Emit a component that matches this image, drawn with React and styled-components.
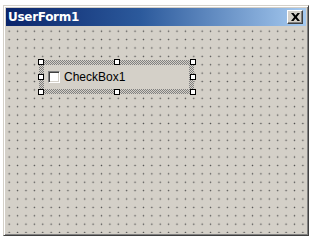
import React from 'react';
import styled, { createGlobalStyle } from 'styled-components';

const Global = createGlobalStyle`
  html, body { margin: 0; padding: 0; background: #ffffff; }
  body { font-family: "DejaVu Sans", sans-serif; }
`;

const Page = styled.div`
  width: 312px;
  height: 240px;
  padding: 5px 0 0 3px;
  box-sizing: border-box;
`;

const Window = styled.div`
  width: 306px;
  height: 231px;
  box-sizing: border-box;
  background: #d4d0c8;
  border-top: 1px solid #d4d0c8;
  border-left: 1px solid #d4d0c8;
  border-right: 1px solid #404040;
  border-bottom: 1px solid #404040;
  box-shadow: inset 1px 1px 0 #ffffff, inset -1px -1px 0 #808080;
  padding: 2px;
  display: flex;
  flex-direction: column;
`;

const TitleBar = styled.div`
  height: 18px;
  flex: none;
  display: flex;
  align-items: center;
  justify-content: space-between;
  padding: 0 3px 0 2px;
  background: linear-gradient(to right, #0a246a 0%, #2c5a9c 45%, #a6caf0 100%);
`;

const Title = styled.span`
  color: #ffffff;
  font-family: "DejaVu Sans", Verdana, sans-serif;
  font-weight: bold;
  font-size: 12px;
  letter-spacing: -0.3px;
`;

const CloseButton = styled.div`
  width: 16px;
  height: 14px;
  box-sizing: border-box;
  background: #d4d0c8;
  border-top: 1px solid #ffffff;
  border-left: 1px solid #ffffff;
  border-right: 1px solid #404040;
  border-bottom: 1px solid #404040;
  box-shadow: inset -1px -1px 0 #808080;
  display: flex;
  align-items: center;
  justify-content: center;
`;

const Canvas = styled.div`
  flex: 1;
  position: relative;
  background-color: #d4d0c8;
  background-image: radial-gradient(circle, #4a4a4a 0.7px, transparent 1px);
  background-size: 8.4px 8.4px;
  background-position: -1px 1px;
`;

const Selection = styled.div`
  position: absolute;
  left: 33px;
  top: 34px;
  width: 155px;
  height: 34px;
  box-sizing: border-box;
  padding: 5px;
  background-image: repeating-conic-gradient(#808080 0 25%, #d4d0c8 0 50%);
  background-size: 2px 2px;
`;

const Control = styled.div`
  width: 100%;
  height: 100%;
  background: #d4d0c8;
  display: flex;
  align-items: center;
  gap: 4px;
  padding-left: 4px;
  box-sizing: border-box;
`;

const Box = styled.div`
  width: 12px;
  height: 12px;
  box-sizing: border-box;
  background: #ffffff;
  border-top: 1px solid #808080;
  border-left: 1px solid #808080;
  border-right: 1px solid #ffffff;
  border-bottom: 1px solid #ffffff;
  box-shadow: inset 1px 1px 0 #404040, inset -1px -1px 0 #d4d0c8;
`;

const Label = styled.span`
  font-family: "Liberation Sans", Arial, sans-serif;
  font-size: 12px;
  color: #000000;
`;

const Handle = styled.div`
  position: absolute;
  width: 6px;
  height: 6px;
  box-sizing: border-box;
  background: #ffffff;
  border: 1px solid #000000;
  left: ${p => p.$x}px;
  top: ${p => p.$y}px;
`;

const handles = [
  [-1, -1], [75, -1], [151, -1],
  [-1, 14], [151, 14],
  [-1, 29], [75, 29], [151, 29],
];

function CloseIcon() {
  return (
    <svg width="9" height="8" viewBox="0 0 9 8">
      <path d="M0 0h2.5L4.5 2.5 6.5 0H9L5.8 4 9 8H6.5L4.5 5.5 2.5 8H0l3.2-4z" fill="#000" />
    </svg>
  );
}

export default function App() {
  return (
    <>
      <Global />
      <Page>
        <Window>
          <TitleBar>
            <Title>UserForm1</Title>
            <CloseButton><CloseIcon /></CloseButton>
          </TitleBar>
          <Canvas>
            <Selection>
              <Control>
                <Box />
                <Label>CheckBox1</Label>
              </Control>
              {handles.map(([x, y], i) => <Handle key={i} $x={x} $y={y} />)}
            </Selection>
          </Canvas>
        </Window>
      </Page>
    </>
  );
}
